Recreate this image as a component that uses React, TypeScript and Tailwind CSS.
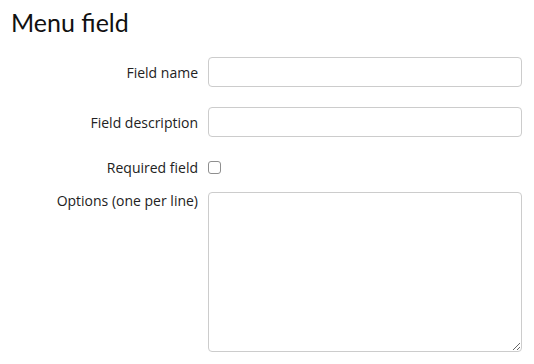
export default function App() {
    return (
        <div className="min-h-[364px] w-[534px] bg-white text-[#222] font-['Open_Sans',sans-serif]">
            <h1 className="pl-[11px] pt-[5px] text-[25px] leading-[34px] font-['Lato',sans-serif] font-normal text-[#111]">
                Menu field
            </h1>

            <form className="mt-[18px] flex flex-col gap-5">
                <div className="flex items-center gap-[10px]">
                    <label className="w-[198px] text-right text-[14px]">Field name</label>
                    <input type="text" className="h-[30px] w-[314px] rounded border border-[#ccc] bg-white px-2 text-[14px] outline-none" />
                </div>

                <div className="flex items-center gap-[10px]">
                    <label className="w-[198px] text-right text-[14px]">Field description</label>
                    <input type="text" className="h-[30px] w-[314px] rounded border border-[#ccc] bg-white px-2 text-[14px] outline-none" />
                </div>

                <div className="flex items-center gap-[10px]">
                    <label className="w-[198px] text-right text-[14px]">Required field</label>
                    <input type="checkbox" className="m-0 h-[13px] w-[13px] appearance-none rounded-[3px] border border-[#8f8f8f] bg-white" />
                </div>

                <div className="-mt-[6px] flex items-start gap-[10px]">
                    <label className="w-[198px] text-right text-[14px] leading-[18px]">Options (one per line)</label>
                    <textarea className="h-[160px] w-[314px] rounded border border-[#ccc] bg-white px-2 py-1 text-[14px] outline-none" />
                </div>
            </form>
        </div>
    );
}
